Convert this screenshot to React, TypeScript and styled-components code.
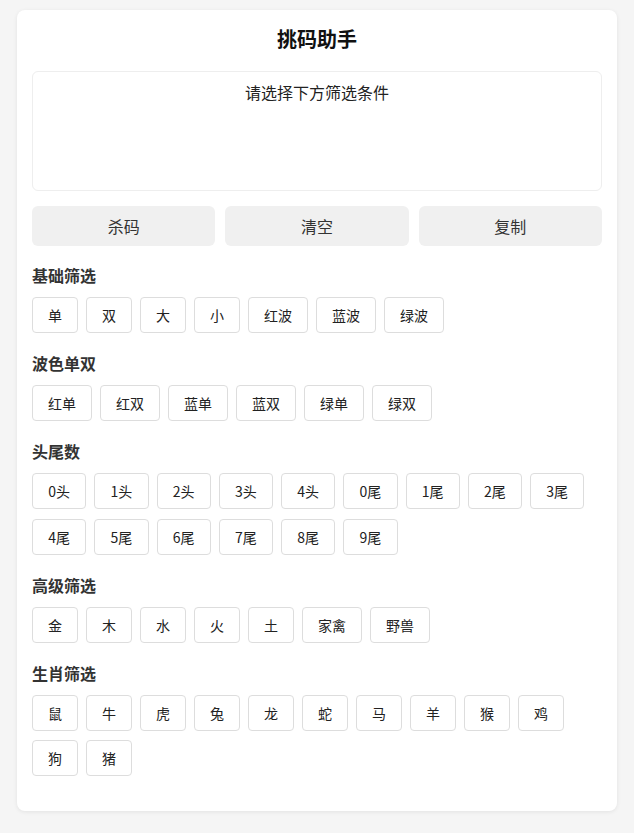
import React from "react";
import styled, { createGlobalStyle } from "styled-components";

const GlobalStyle = createGlobalStyle`
  * {
    box-sizing: border-box;
  }
  body {
    margin: 0;
    background: #f5f5f5;
    font-family: "Noto Sans CJK SC", "Noto Sans", sans-serif;
    color: #333;
  }
`;

const Page = styled.div`
  padding: 10px 17px 23px;
`;

const Card = styled.div`
  background: #fff;
  border-radius: 8px;
  box-shadow: 0 1px 4px rgba(0, 0, 0, 0.08);
  padding: 14px 15px 14px;
`;

const Title = styled.h1`
  margin: 0 0 17px;
  font-size: 20px;
  line-height: 30px;
  font-weight: bold;
  text-align: center;
  color: #111;
`;

const ResultBox = styled.div`
  height: 120px;
  border: 1px solid #eee;
  border-radius: 6px;
  padding: 9px 10px;
  text-align: center;
  font-size: 16px;
  line-height: 22px;
  color: #222;
`;

const ActionRow = styled.div`
  display: grid;
  grid-template-columns: repeat(3, 1fr);
  gap: 10px;
  margin: 15px 0 20px;
`;

const ActionButton = styled.button`
  height: 40px;
  border: none;
  border-radius: 6px;
  background: #f0f0f0;
  font-family: inherit;
  font-size: 16px;
  color: #333;
  cursor: pointer;
`;

const Section = styled.div`
  margin-bottom: 21px;
`;

const SectionTitle = styled.div`
  font-size: 16px;
  line-height: 18px;
  font-weight: bold;
  color: #333;
  margin-bottom: 13px;
`;

const TagGrid = styled.div`
  display: flex;
  flex-wrap: wrap;
  gap: 9.5px 8px;
`;

const Tag = styled.button<{ $wide?: boolean }>`
  height: 36px;
  min-width: ${(p) => (p.$wide ? "54.25px" : "46px")};
  padding: 0 15px;
  border: 1px solid #ddd;
  border-radius: 4px;
  background: #fff;
  font-family: inherit;
  font-size: 14px;
  color: #222;
  cursor: pointer;
`;

const sections: { title: string; items: string[]; wide?: boolean }[] = [
  { title: "基础筛选", items: ["单", "双", "大", "小", "红波", "蓝波", "绿波"] },
  { title: "波色单双", items: ["红单", "红双", "蓝单", "蓝双", "绿单", "绿双"] },
  {
    title: "头尾数",
    wide: true,
    items: [
      ...["0", "1", "2", "3", "4"].map((n) => n + "头"),
      ...["0", "1", "2", "3", "4", "5", "6", "7", "8", "9"].map((n) => n + "尾"),
    ],
  },
  { title: "高级筛选", items: ["金", "木", "水", "火", "土", "家禽", "野兽"] },
  {
    title: "生肖筛选",
    items: ["鼠", "牛", "虎", "兔", "龙", "蛇", "马", "羊", "猴", "鸡", "狗", "猪"],
  },
];

export default function App() {
  return (
    <>
      <GlobalStyle />
      <Page>
        <Card>
          <Title>挑码助手</Title>
          <ResultBox>请选择下方筛选条件</ResultBox>
          <ActionRow>
            <ActionButton>杀码</ActionButton>
            <ActionButton>清空</ActionButton>
            <ActionButton>复制</ActionButton>
          </ActionRow>
          {sections.map((s) => (
            <Section key={s.title}>
              <SectionTitle>{s.title}</SectionTitle>
              <TagGrid>
                {s.items.map((it) => (
                  <Tag key={it} $wide={s.wide}>
                    {it}
                  </Tag>
                ))}
              </TagGrid>
            </Section>
          ))}
        </Card>
      </Page>
    </>
  );
}
